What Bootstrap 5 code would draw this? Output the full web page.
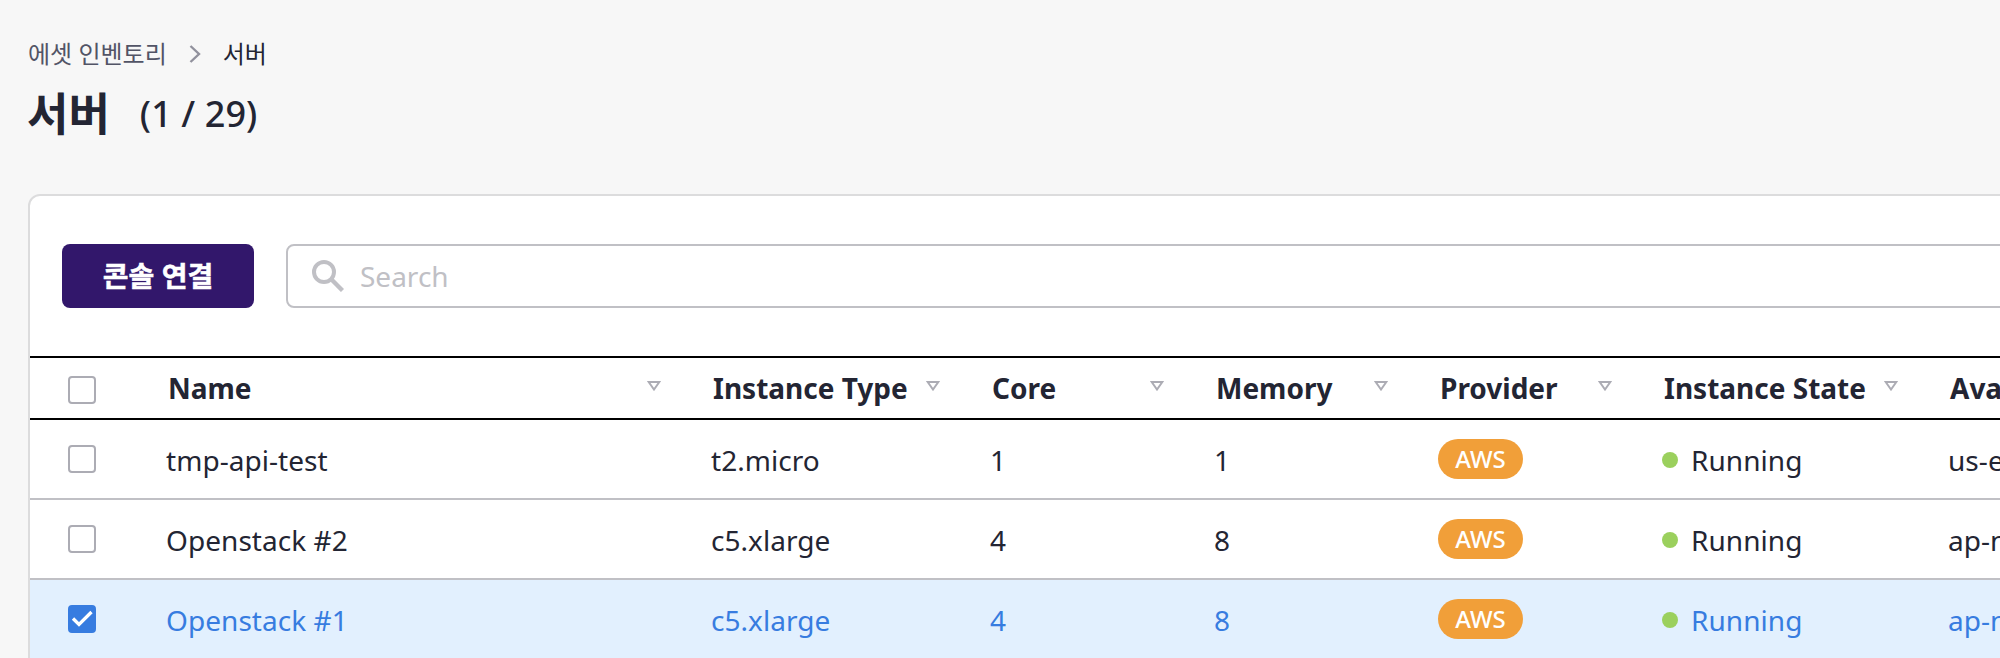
<!DOCTYPE html>
<html lang="ko">
<head>
<meta charset="utf-8">
<meta name="viewport" content="width=device-width, initial-scale=1">
<title>서버</title>
<link href="https://cdn.jsdelivr.net/npm/bootstrap@5.3.0/dist/css/bootstrap.min.css" rel="stylesheet">
<style>
html { overflow: hidden; }
body { background: #f7f7f7; color: #232533; font-family: "Noto Sans", "Noto Sans CJK KR", sans-serif; font-size: 28px; height: 658px; overflow: hidden; }
.page-head { height: 194px; padding: 36px 0 0 28px; }
.crumbs { font-size: 24px; line-height: 36px; column-gap: 22px; }
.crumbs a { color: #525466; }
.page-title { font-size: 45px; line-height: 60px; margin: 12px 0 0 -1px; column-gap: 30px; }
.page-title .count { font-size: 36px; font-weight: 500; letter-spacing: .1px; }
.panel { width: 2400px; height: 560px; margin-left: 28px; border: 2px solid #dcdcdd; border-radius: 12px; background: #fff; overflow: hidden; }
.toolbar { height: 160px; padding: 48px 32px; column-gap: 32px; }
.btn-console { width: 192px; height: 64px; border-radius: 8px; background: #32176b; color: #fff; font-size: 28px; line-height: 36px; -webkit-text-stroke: .5px #fff; }
.search-box { border: 2px solid #c0c0c5; border-radius: 8px; height: 64px; padding: 0 24px; }
.search-box svg { margin-right: 16px; }
.search-box input { color: #232533; font-size: 28px; line-height: 40px; outline: 0; }
.search-box input::placeholder { color: #c0c0c5; opacity: 1; }
.server-table { table-layout: fixed; width: 2396px; margin: 0; border-collapse: separate; border-spacing: 0; line-height: 40px; color: inherit; }
.server-table th, .server-table td { padding: 0; vertical-align: middle; white-space: nowrap; }
.server-table th { height: 64px; border-top: 2px solid #000; border-bottom: 2px solid #000; }
.server-table th > div { padding: 0 50px 0 2px; }
.server-table th svg { margin-top: -4px; }
.server-table td { height: 80px; border-bottom: 2px solid #c0c0c5; }
.cell-text { position: relative; top: 1px; letter-spacing: .05px; }
.server-table tr.picked td { background: #e2f0fe; color: #377ce0; }
.check { display: block; appearance: none; width: 28px; height: 28px; margin: 0 0 0 38px; border: 2px solid #acacb4; border-radius: 4px; background: #fff; }
th .check { position: relative; top: 2px; }
.check:checked { border-color: #377ce0; background: #377ce0 url("data:image/svg+xml,%3Csvg xmlns='http://www.w3.org/2000/svg' viewBox='0 0 24 24'%3E%3Cpath d='M3 11.5l6 6L21.5 5' fill='none' stroke='%23fff' stroke-width='3.3'/%3E%3C/svg%3E") center/24px no-repeat; }
.provider { display: block; width: 85px; height: 40px; border-radius: 20px; background: #f19f39; color: #fff; font-size: 24px; font-weight: 500; line-height: 40px; text-align: center; }
.dot { width: 16px; height: 16px; border-radius: 50%; background: #9bd05d; margin-right: 13px; }
</style>
</head>
<body>
<svg class="d-none"><symbol id="sort" viewBox="0 0 14 10"><path d="M1.7 1h10.6L7 8.5z" fill="none" stroke="#acacb4" stroke-width="2"/></symbol></svg>
<header class="page-head">
  <nav class="crumbs d-flex align-items-center">
    <a class="text-decoration-none" href="#">에셋 인벤토리</a>
    <svg width="12" height="18" viewBox="0 0 12 18"><path d="M1.5 1l8.5 8-8.5 8" fill="none" stroke="#91919d" stroke-width="2.4"/></svg>
    <span>서버</span>
  </nav>
  <h1 class="page-title d-flex align-items-center"><span class="fw-bold">서버</span><span class="count">(1 / 29)</span></h1>
</header>
<main class="panel">
  <div class="toolbar d-flex">
    <button class="btn btn-console fw-bold p-0 border-0" type="button">콘솔 연결</button>
    <label class="search-box d-flex align-items-center flex-grow-1">
      <svg width="32" height="32" viewBox="0 0 32 32" fill="none" stroke="#c0c0c5"><circle cx="12" cy="12" r="10" stroke-width="4"/><path d="M19.5 19.5l11 11" stroke-width="4.4"/></svg>
      <input class="border-0 p-0 flex-grow-1 bg-transparent" type="text" placeholder="Search">
    </label>
  </div>
  <table class="server-table">
    <colgroup><col style="width:136px"><col style="width:545px"><col style="width:279px"><col style="width:224px"><col style="width:224px"><col style="width:224px"><col style="width:286px"><col></colgroup>
    <thead><tr>
      <th><input class="check" type="checkbox"></th>
      <th><div class="d-flex align-items-center justify-content-between">Name<svg width="14" height="10"><use href="#sort"/></svg></div></th>
      <th><div class="d-flex align-items-center justify-content-between">Instance Type<svg width="14" height="10"><use href="#sort"/></svg></div></th>
      <th><div class="d-flex align-items-center justify-content-between">Core<svg width="14" height="10"><use href="#sort"/></svg></div></th>
      <th><div class="d-flex align-items-center justify-content-between">Memory<svg width="14" height="10"><use href="#sort"/></svg></div></th>
      <th><div class="d-flex align-items-center justify-content-between">Provider<svg width="14" height="10"><use href="#sort"/></svg></div></th>
      <th><div class="d-flex align-items-center justify-content-between">Instance State<svg width="14" height="10"><use href="#sort"/></svg></div></th>
      <th><div>Availability Zone</div></th>
    </tr></thead>
    <tbody>
      <tr>
        <td><input class="check" type="checkbox"></td>
        <td><span class="cell-text">tmp-api-test</span></td><td><span class="cell-text">t2.micro</span></td><td><span class="cell-text">1</span></td><td><span class="cell-text">1</span></td>
        <td><span class="provider">AWS</span></td>
        <td><div class="cell-text d-flex align-items-center"><i class="dot"></i>Running</div></td><td><span class="cell-text">us-east-1</span></td>
      </tr>
      <tr>
        <td><input class="check" type="checkbox"></td>
        <td><span class="cell-text">Openstack #2</span></td><td><span class="cell-text">c5.xlarge</span></td><td><span class="cell-text">4</span></td><td><span class="cell-text">8</span></td>
        <td><span class="provider">AWS</span></td>
        <td><div class="cell-text d-flex align-items-center"><i class="dot"></i>Running</div></td><td><span class="cell-text">ap-northeast-2</span></td>
      </tr>
      <tr class="picked">
        <td><input class="check" type="checkbox" checked></td>
        <td><span class="cell-text">Openstack #1</span></td><td><span class="cell-text">c5.xlarge</span></td><td><span class="cell-text">4</span></td><td><span class="cell-text">8</span></td>
        <td><span class="provider">AWS</span></td>
        <td><div class="cell-text d-flex align-items-center"><i class="dot"></i>Running</div></td><td><span class="cell-text">ap-northeast-2</span></td>
      </tr>
    </tbody>
  </table>
</main>
<script src="https://cdn.jsdelivr.net/npm/bootstrap@5.3.0/dist/js/bootstrap.bundle.min.js"></script>
</body>
</html>
